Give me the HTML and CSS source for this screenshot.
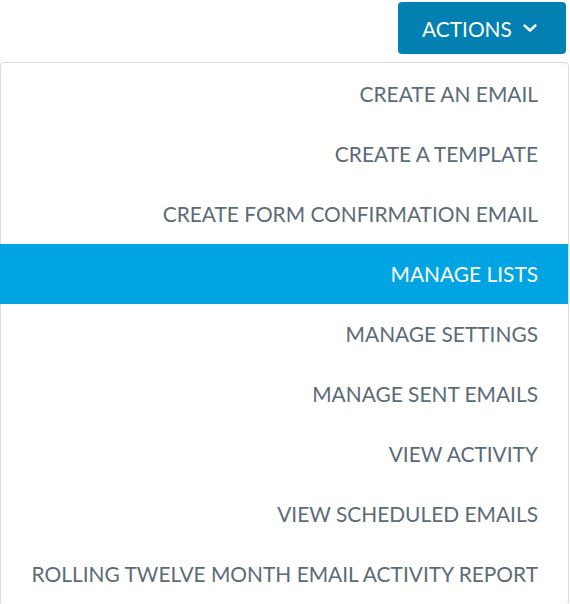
FILE: index.html
```html
<!DOCTYPE html>
<html lang="en">
<head>
  <meta charset="UTF-8" />
  <meta name="viewport" content="width=device-width, initial-scale=1.0" />
  <title>Actions</title>
  <link rel="stylesheet" href="styles.css">
</head>
<body>
  <div class="actions">
    <button class="actions-btn" type="button">
      ACTIONS
      <svg class="chevron" width="16" height="10" viewBox="0 0 16 10">
        <path d="M2.5 2.5 L8 7.5 L13.5 2.5" fill="none" stroke="#fff" stroke-width="2.4" stroke-linecap="round" stroke-linejoin="round" />
      </svg>
    </button>

    <ul class="menu">
      <li class="menu-item">CREATE AN EMAIL</li>
      <li class="menu-item">CREATE A TEMPLATE</li>
      <li class="menu-item">CREATE FORM CONFIRMATION EMAIL</li>
      <li class="menu-item active">MANAGE LISTS</li>
      <li class="menu-item">MANAGE SETTINGS</li>
      <li class="menu-item">MANAGE SENT EMAILS</li>
      <li class="menu-item">VIEW ACTIVITY</li>
      <li class="menu-item">VIEW SCHEDULED EMAILS</li>
      <li class="menu-item">ROLLING TWELVE MONTH EMAIL ACTIVITY REPORT</li>
    </ul>
  </div>
</body>
</html>
```

FILE: styles.css
```css
body {
  margin: 0;
  font-family: 'Lato', 'Liberation Sans', sans-serif;
  background-color: #fff;
}

.actions {
  display: flex;
  flex-direction: column;
  align-items: flex-end;
  padding-top: 2px;
}

.actions-btn {
  display: flex;
  align-items: center;
  gap: 10px;
  height: 52px;
  width: 168px;
  margin-right: 4px;
  padding: 0 0 0 24px;
  border: none;
  border-radius: 4px;
  background-color: #0180b1;
  color: #fff;
  font-family: inherit;
  font-size: 20.9px;
  cursor: pointer;
}

.chevron {
  display: block;
}

.menu {
  list-style: none;
  margin: 8px 1px 0 0;
  padding: 1px 0;
  width: 569px;
  box-sizing: border-box;
  border: 1px solid #dcdcdc;
  border-radius: 4px;
  background-color: #fff;
}

.menu-item {
  height: 60px;
  line-height: 60px;
  padding-right: 30px;
  text-align: right;
  font-size: 20.9px;
  color: #5b6b77;
  cursor: pointer;
}

.menu-item.active {
  margin-left: -1px;
  background-color: #00a4e2;
  color: #fff;
}
```
